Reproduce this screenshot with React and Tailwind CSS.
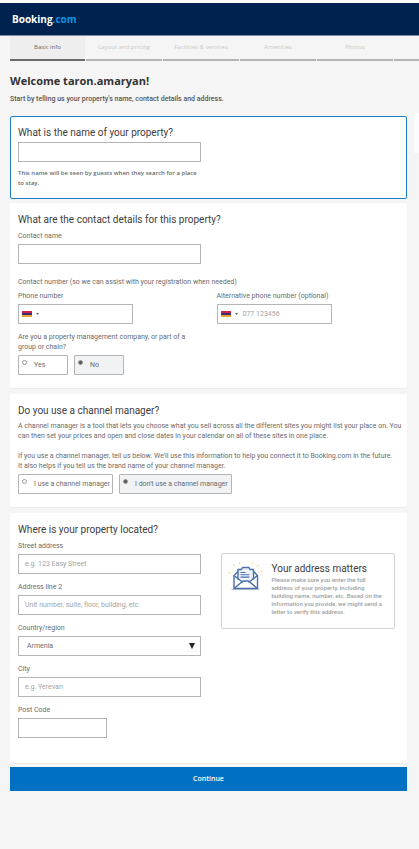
import { useState } from 'react';
import clsx from 'clsx';

const TABS = ['Basic info', 'Layout and pricing', 'Facilities & services', 'Amenities', 'Photos', ''];

const inputClass =
  'block w-full h-5 bg-white border border-[#b4b4b4] px-1.5 text-[7px] leading-[10px] text-[#6b6b6b] placeholder:text-[#a3a3a3] outline-none';

function Card({ title, active, className, children }) {
  return (
    <section
      className={clsx(
        'rounded-[2px] bg-white px-[7px] border',
        active ? 'border-[#1a7fc8]' : 'border-transparent shadow-[0_1px_0_#ececec]',
        className
      )}
    >
      <h2 className="text-[10px] leading-[15px] text-[#3d3d3d]">{title}</h2>
      {children}
    </section>
  );
}

function Field({ id, label, className, children }) {
  return (
    <div className={className}>
      <label htmlFor={id} className="block leading-[10px] mb-[3px]">{label}</label>
      {children}
    </div>
  );
}

function Flag() {
  return (
    <svg viewBox="0 0 10 6" className="w-2.5 h-1.5 shrink-0" aria-hidden="true">
      <rect width="10" height="2" fill="#d4213f" />
      <rect y="2" width="10" height="2" fill="#3b2b80" />
      <rect y="4" width="10" height="2" fill="#e9a52c" />
    </svg>
  );
}

function PhoneInput({ id, placeholder }) {
  return (
    <div className="flex items-center h-5 w-[115px] border border-[#b4b4b4] bg-white pl-[3px]">
      <button type="button" aria-label="Country code" className="flex items-center gap-1 shrink-0">
        <Flag />
        <svg viewBox="0 0 3 2" className="w-[3px] h-0.5" aria-hidden="true">
          <path d="M0 0h3L1.5 2z" fill="#666" />
        </svg>
      </button>
      <input
        id={id}
        type="tel"
        placeholder={placeholder}
        className="min-w-0 flex-1 h-full pl-[5px] text-[7px] text-[#6b6b6b] placeholder:text-[#a3a3a3] outline-none"
      />
    </div>
  );
}

function RadioBox({ name, value, selected, onSelect, className, children }) {
  const checked = selected === value;
  return (
    <label
      className={clsx(
        'flex items-start gap-[7px] h-5 rounded-[1px] border border-[#b4b4b4] pl-[3px]',
        checked ? 'bg-[#f0f2f4]' : 'bg-white',
        className
      )}
    >
      <input
        type="radio"
        name={name}
        checked={checked}
        onChange={() => onSelect(value)}
        className="appearance-none shrink-0 mt-1 size-[5px] rounded-full border border-[#999] bg-white checked:bg-[#555]"
      />
      <span className="leading-[18px] whitespace-nowrap">{children}</span>
    </label>
  );
}

function EnvelopeIcon() {
  return (
    <svg viewBox="0 0 36 30" className="w-9 h-[30px] shrink-0" fill="none" aria-hidden="true">
      <g stroke="#fbe3a6" strokeWidth="1.2" strokeLinecap="round">
        <path d="M7 4L5.500 2.500M12 2.500l-.7-2M24 2.500l.7-2M29 4.500l1.700-1.700M32 10l2-.8M2.500 11.500l-2-1" />
      </g>
      <path d="M3.500 27.300h28" stroke="#c9ccd2" strokeWidth="1.500" />
      <g stroke="#4a6ea9" strokeWidth="1.400" strokeLinejoin="round">
        <path d="M10 9.500L6 13.500v13h23.500v-13L25.500 9.500" />
        <path d="M10 17.500V7.500h3.500l1-2h6.500l1 2h3.500v10" fill="#eef3fb" />
        <path d="M6 13.500l9 7M29.500 13.500l-9 7M6 26.500l9-7.500h5.500l9 7.500" />
        <path d="M12.500 10.500h5M12.500 12.800h9M12.500 15.100h9" strokeWidth="1.100" />
      </g>
    </svg>
  );
}

export default function App() {
  const [company, setCompany] = useState('no');
  const [channel, setChannel] = useState('no');

  return (
    <div className="relative min-h-screen overflow-hidden bg-[#f5f5f5] font-['Roboto','Open_Sans',sans-serif] text-[7px] leading-[10px] text-[#6b6b6b]">
      <header className="h-9 border-t-[3px] border-t-white border-b border-b-[#7d8da6] bg-[#00224f] flex items-center px-3">
        <a href="#" className="font-['Open_Sans',sans-serif] text-[10px] leading-[14px] font-bold text-white">
          Booking<span className="text-[#0896e0]">.com</span>
        </a>
      </header>

      <nav className="flex gap-px ml-2.5 font-['Open_Sans',sans-serif]">
        {TABS.map((tab, i) => (
          <a
            key={i}
            href="#"
            aria-label={tab || 'Next step'}
            className={clsx(
              'h-[25px] shrink-0 border-b-2 text-center text-[6px] leading-[23px] whitespace-nowrap',
              i === 0 ? 'w-[75px] border-[#6b6b6b] bg-[#eeeeee] text-[#666]' : 'w-[76px] border-[#b4b4b4] text-[#c8c8c8]'
            )}
          >
            {tab}
          </a>
        ))}
      </nav>

      <main className="ml-2.5 mr-3">
        <h1 className="mt-3 font-['Open_Sans',sans-serif] text-[11px] leading-4 font-bold text-[#333]">Welcome taron.amaryan!</h1>
        <p className="mt-[5px] font-medium text-[#555]">
          Start by telling us your property's name, contact details and address.
        </p>

        <form className="mt-3" onSubmit={(e) => e.preventDefault()}>
          <Card title={<label htmlFor="name">What is the name of your property?</label>} active className="pt-2 pb-2.5">
            <div className="grid grid-cols-2 gap-4 mt-0.5">
              <div>
                <input id="name" type="text" className={inputClass} />
                <p className="mt-1.5 font-['Open_Sans',sans-serif] text-[6px] font-semibold">
                  This name will be seen by guests when they search for a place to stay.
                </p>
              </div>
            </div>
          </Card>

          <Card title="What are the contact details for this property?" className="mt-1 pt-2 pb-3">
            <div className="grid grid-cols-2 gap-x-4 mt-1">
              <Field id="contact" label="Contact name">
                <input id="contact" type="text" className={inputClass} />
              </Field>
              <p className="col-span-2 mt-[13px]">Contact number (so we can assist with your registration when needed)</p>
              <Field id="phone" label="Phone number" className="mt-1">
                <PhoneInput id="phone" />
              </Field>
              <Field id="altPhone" label="Alternative phone number (optional)" className="mt-1">
                <PhoneInput id="altPhone" placeholder="077 123456" />
              </Field>
              <fieldset className="mt-2">
                <legend className="mb-[3px] pr-2">Are you a property management company, or part of a group or chain?</legend>
                <div className="flex gap-1.5">
                  <RadioBox name="company" value="yes" selected={company} onSelect={setCompany} className="w-[50px]">Yes</RadioBox>
                  <RadioBox name="company" value="no" selected={company} onSelect={setCompany} className="w-[50px]">No</RadioBox>
                </div>
              </fieldset>
            </div>
          </Card>

          <Card title="Do you use a channel manager?" className="mt-1.5 pt-2 pb-3">
            <p className="mt-[3px] -mr-1">
              A channel manager is a tool that lets you choose what you sell across all the different sites you might list your place on. You can then set your prices and open and close dates in your calendar on all of these sites in one place.
            </p>
            <p className="mt-2.5 pr-1">
              If you use a channel manager, tell us below. We'll use this information to help you connect it to Booking.com in the future. It also helps if you tell us the brand name of your channel manager.
            </p>
            <div className="flex gap-1.5 mt-[3px]">
              <RadioBox name="channel" value="yes" selected={channel} onSelect={setChannel} className="w-[95px]">I use a channel manager</RadioBox>
              <RadioBox name="channel" value="no" selected={channel} onSelect={setChannel} className="w-[113px]">I don't use a channel manager</RadioBox>
            </div>
          </Card>

          <Card title="Where is your property located?" className="mt-1.5 pt-2 pb-6">
            <div className="grid grid-cols-2 gap-4 mt-1">
              <div className="flex flex-col gap-2">
                <Field id="street" label="Street address">
                  <input id="street" type="text" placeholder="e.g. 123 Easy Street" className={inputClass} />
                </Field>
                <Field id="line2" label="Address line 2">
                  <input id="line2" type="text" placeholder="Unit number, suite, floor, building, etc." className={inputClass} />
                </Field>
                <Field id="country" label="Country/region">
                  <div className="relative">
                    <select id="country" className={clsx(inputClass, 'appearance-none pl-2')}>
                      <option>Armenia</option>
                    </select>
                    <svg viewBox="0 0 6 6" className="absolute right-1.5 top-[7px] size-1.5 pointer-events-none" aria-hidden="true">
                      <path d="M0 0h6L3 6z" fill="#222" />
                    </svg>
                  </div>
                </Field>
                <Field id="city" label="City">
                  <input id="city" type="text" placeholder="e.g. Yerevan" className={inputClass} />
                </Field>
                <Field id="post" label="Post Code" className="w-[89px]">
                  <input id="post" type="text" className={inputClass} />
                </Field>
              </div>

              <aside className="mt-3 mx-1 self-start flex gap-2 rounded-[2px] border border-[#d2d2d2] pl-1.5 pr-[7px] pt-2 pb-3">
                <EnvelopeIcon />
                <div>
                  <h3 className="text-[10px] leading-[14px] text-[#3d3d3d]">Your address matters</h3>
                  <p className="text-[6px] leading-2 font-medium text-[#a0a0a0]">
                    Please make sure you enter the full address of your property, including building name, number, etc. Based on the information you provide, we might send a letter to verify this address.
                  </p>
                </div>
              </aside>
            </div>
          </Card>

          <button type="submit" className="block w-full mt-1 h-6 bg-[#0071c2] font-['Open_Sans',sans-serif] text-[7px] font-semibold text-white">
            Continue
          </button>
        </form>
      </main>

      <div className="absolute right-0 top-[113px] w-[5px] h-10 bg-[#fbfcff]" />
    </div>
  );
}
